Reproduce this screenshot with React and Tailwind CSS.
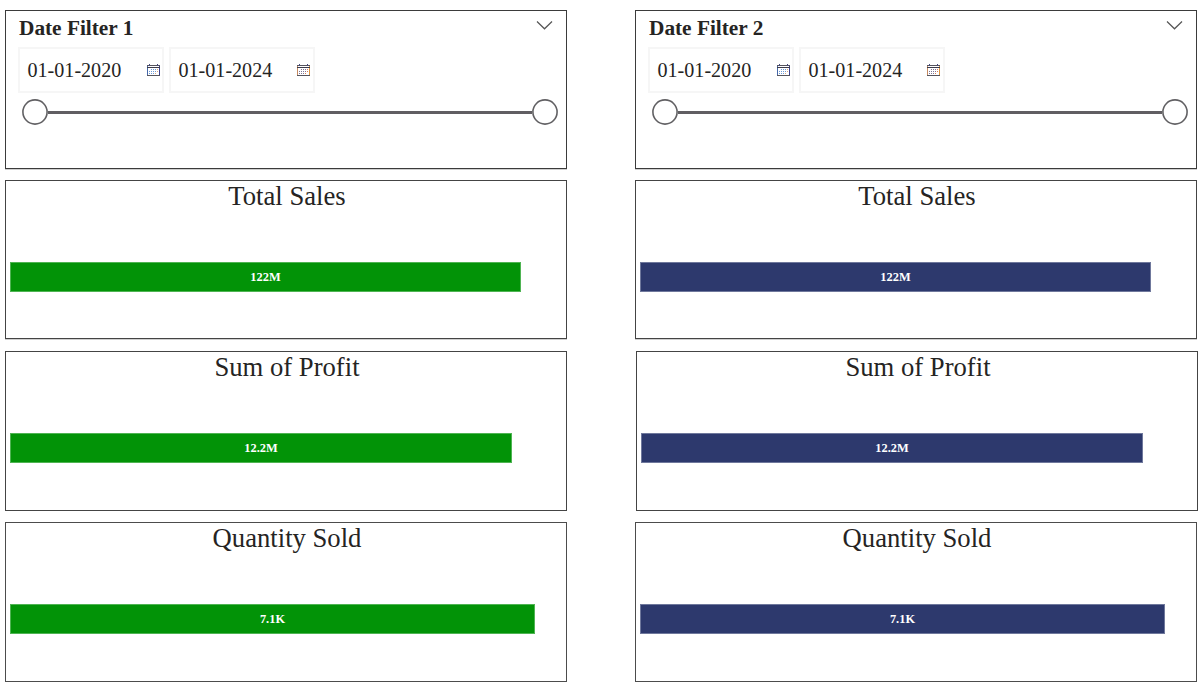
function Calendar({ warm }) {
  return (
    <svg width="13" height="12" viewBox="0 0 13 12" shapeRendering="crispEdges" className="shrink-0">
      <path d="M0 1h13v11H0z" fill="#55545c" />
      <path d="M1 2h11v1H1zM1 4h11v7H1z" fill="#fff" />
      <path d="M2 0h1v2H2zM10 0h1v2h-1z" fill="#45497c" />
      <path d="M0 2h1v9H0z" fill={warm ? "#c58a62" : "#4668a8"} />
      <path d="M12 2h1v9h-1z" fill={warm ? "#dc9440" : "#3d4290"} />
      <path d="M0 3h13v1H0z" fill="#3c3b4a" />
      <path d="M4 5h1v1H4zM6 5h1v1H6zM8 5h1v1H8zM2 7h1v1H2zM4 7h1v1H4zM6 7h1v1H6zM8 7h1v1H8zM2 9h1v1H2zM4 9h1v1H4zM6 9h1v1H6z" fill={warm ? "#7d7597" : "#6a9ad8"} />
      <path d="M10 5h1v1h-1zM10 7h1v1h-1zM8 9h1v1H8z" fill={warm ? "#e07a50" : "#dba27c"} />
    </svg>
  );
}

function DateInput({ value, warm }) {
  return (
    <div className={`flex h-[46px] w-[146px] items-center justify-between border-2 border-[#f6f6f6] pl-[7.5px] ${warm ? "pr-[3px]" : "pr-[2.5px]"}`}>
      <span className="-mt-px text-[20.1px] leading-6">{value}</span>
      <Calendar warm={warm} />
    </div>
  );
}

function DateFilter({ title }) {
  return (
    <section className="h-[159px] border border-[#3b3b3b] shadow-[0_1px_0_#cfcfcf]">
      <header className="flex items-start justify-between pr-[13px] pl-[13px]">
        <h2 className="pt-[5px] text-[21.3px] leading-6 font-bold">{title}</h2>
        <svg width="17" height="10" viewBox="0 0 17 10" fill="none" className="mt-[9px]">
          <path d="M1 1.5l7.5 7.3L16 1.5" stroke="#555" strokeWidth="1.2" />
        </svg>
      </header>
      <div className="mt-[7px] flex gap-[5px] pl-[12px]">
        <DateInput value="01-01-2020" />
        <DateInput value="01-01-2024" warm />
      </div>
      <div className="mt-[6px] mr-[8px] ml-4 flex items-center">
        <svg width="26" height="26" className="shrink-0">
          <circle cx="13" cy="13" r="12.1" fill="#fff" stroke="#626164" strokeWidth="1.6" />
        </svg>
        <span className="h-[3px] flex-1 bg-[#605e62]" />
        <svg width="26" height="26" className="shrink-0">
          <circle cx="13" cy="13" r="12.1" fill="#fff" stroke="#626164" strokeWidth="1.6" />
        </svg>
      </div>
    </section>
  );
}

function Metric({ title, value, card, bar }) {
  return (
    <section className={`w-[562px] border ${card}`}>
      <h2 className="-mt-px pl-[2px] text-center text-[26.667px] leading-8">{title}</h2>
      <div className={`mt-[50px] ml-[4px] flex h-[30px] items-center justify-center border text-[12.4px] leading-4 font-bold text-white ${bar}`}>
        {value}
      </div>
    </section>
  );
}

const green = "bg-[#029307] border-[#4fb453]";
const navy = "bg-[#2d396d] border-[#6f789c]";

function Column({ title, color, profit }) {
  return (
    <div className="w-[562px]">
      <DateFilter title={title} />
      <Metric title="Total Sales" value="122M" card="mt-[11px] h-[159px] border-[#444] shadow-[0_1px_0_#cfcfcf]" bar={`w-[511px] ${color}`} />
      <Metric title="Sum of Profit" value="12.2M" card={`mt-[12px] h-[160px] border-[#444] ${profit}`} bar={`w-[502px] ${color}`} />
      <Metric title="Quantity Sold" value="7.1K" card="mt-[11px] h-[160px] border-[#4c4c4c]" bar={`w-[525px] ${color}`} />
    </div>
  );
}

export default function App() {
  return (
    <main className="flex h-[690px] w-[1202px] gap-[68px] overflow-hidden bg-white pt-[10px] pl-[5px] font-['Liberation_Serif','Times_New_Roman',serif] text-[#252423]">
      <Column title="Date Filter 1" color={green} profit="" />
      <Column title="Date Filter 2" color={navy} profit="ml-px" />
    </main>
  );
}
